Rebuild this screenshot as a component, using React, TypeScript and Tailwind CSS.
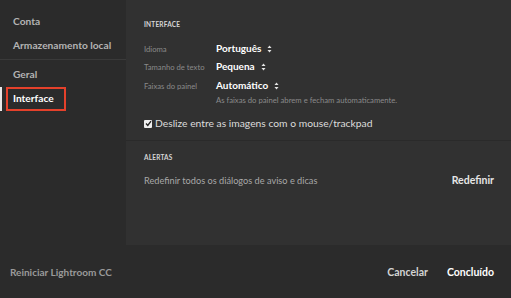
import React, { useState } from 'react';

const font = { fontFamily: 'Lato, "Open Sans", sans-serif' };

const Stepper: React.FC = () => (
  <svg width="5" height="8" viewBox="0 0 5 8" className="ml-[6px] mt-[1px]">
    <path d="M2.5 0.5 L4.5 3 L0.5 3 Z" fill="#e6e6e6" />
    <path d="M2.5 7.5 L4.5 5 L0.5 5 Z" fill="#e6e6e6" />
  </svg>
);

const SettingRow: React.FC<{ label: string; value: string }> = ({ label, value }) => (
  <div className="flex items-center h-[18.5px]">
    <div className="w-[72px] text-[7.7px] text-[#8a8a8a] pt-[3px]">{label}</div>
    <div className="flex items-center text-[10px] font-bold text-white">
      {value}
      <Stepper />
    </div>
  </div>
);

const App: React.FC = () => {
  const [swipe, setSwipe] = useState(true);

  const navTop = ['Conta', 'Armazenamento local'];

  return (
    <div className="w-[511px] h-[298px] flex flex-col bg-[#2b2b2b] overflow-hidden" style={font}>
      <div className="flex h-[245px]">
        {/* sidebar */}
        <div className="w-[126px] pt-[10px] flex flex-col">
          {navTop.map((item) => (
            <div key={item} className="h-[24px] flex items-center pl-[13px] text-[10.2px] font-bold text-[#b4b4b4]">
              {item}
            </div>
          ))}
          <div className="h-px bg-[#3a3a3a] mt-[1px]" />
          <div className="h-[24px] mt-[3px] flex items-center pl-[13px] text-[10.2px] font-bold text-[#b4b4b4]">
            Geral
          </div>
          <div className="relative h-[24px] flex items-center">
            <div className="absolute left-0 top-0 h-full w-[2px] bg-[#e8e8e8]" />
            <div className="ml-[6px] h-[24px] w-[60px] border-2 border-[#e5412b] flex items-center pl-[5px] text-[10.2px] font-bold text-white">
              Interface
            </div>
          </div>
        </div>

        {/* main panel */}
        <div className="flex-1 bg-[#313131] flex flex-col">
          <div className="pl-[18px] pt-[20px] pb-[9px] border-b border-[#2a2a2a]">
            <div className="text-[6.5px] font-bold text-[#d6d6d6] tracking-[0.03em]">INTERFACE</div>
            <div className="mt-[9px] flex flex-col">
              <SettingRow label="Idioma" value="Português" />
              <SettingRow label="Tamanho de texto" value="Pequena" />
              <SettingRow label="Faixas do painel" value="Automático" />
            </div>
            <div className="ml-[72px] mt-[1px] text-[7.7px] text-[#8a8a8a]">
              As faixas do painel abrem e fecham automaticamente.
            </div>
            <label className="mt-[9px] flex items-center gap-[3px] text-[10.3px] text-[#dcdcdc] cursor-pointer">
              <span
                className="w-[8px] h-[8px] bg-[#efefef] rounded-[1px] flex items-center justify-center"
                onClick={() => setSwipe(!swipe)}
              >
                {swipe && (
                  <svg width="7" height="7" viewBox="0 0 7 7">
                    <path d="M1 3.6 L2.8 5.4 L6 1.2" stroke="#222" strokeWidth="1.4" fill="none" />
                  </svg>
                )}
              </span>
              Deslize entre as imagens com o mouse/trackpad
            </label>
          </div>

          <div className="pl-[18px] pr-[17px] pt-[12px]">
            <div className="text-[6.5px] font-bold text-[#d6d6d6] tracking-[0.03em]">ALERTAS</div>
            <div className="mt-[10px] flex items-center justify-between">
              <span className="text-[9.2px] text-[#a8a8a8]">Redefinir todos os diálogos de aviso e dicas</span>
              <span className="text-[10.5px] font-bold text-[#e6e6e6]">Redefinir</span>
            </div>
          </div>
        </div>
      </div>

      {/* footer */}
      <div className="flex-1 flex items-center justify-between pl-[10px] pr-[17px] pt-[2px]">
        <span className="text-[10px] font-bold text-[#9a9a9a]">Reiniciar Lightroom CC</span>
        <div className="flex items-center gap-[19px]">
          <span className="text-[10.5px] font-bold text-[#d4d4d4]">Cancelar</span>
          <span className="text-[10.5px] font-bold text-white">Concluído</span>
        </div>
      </div>
    </div>
  );
};

export default App;
